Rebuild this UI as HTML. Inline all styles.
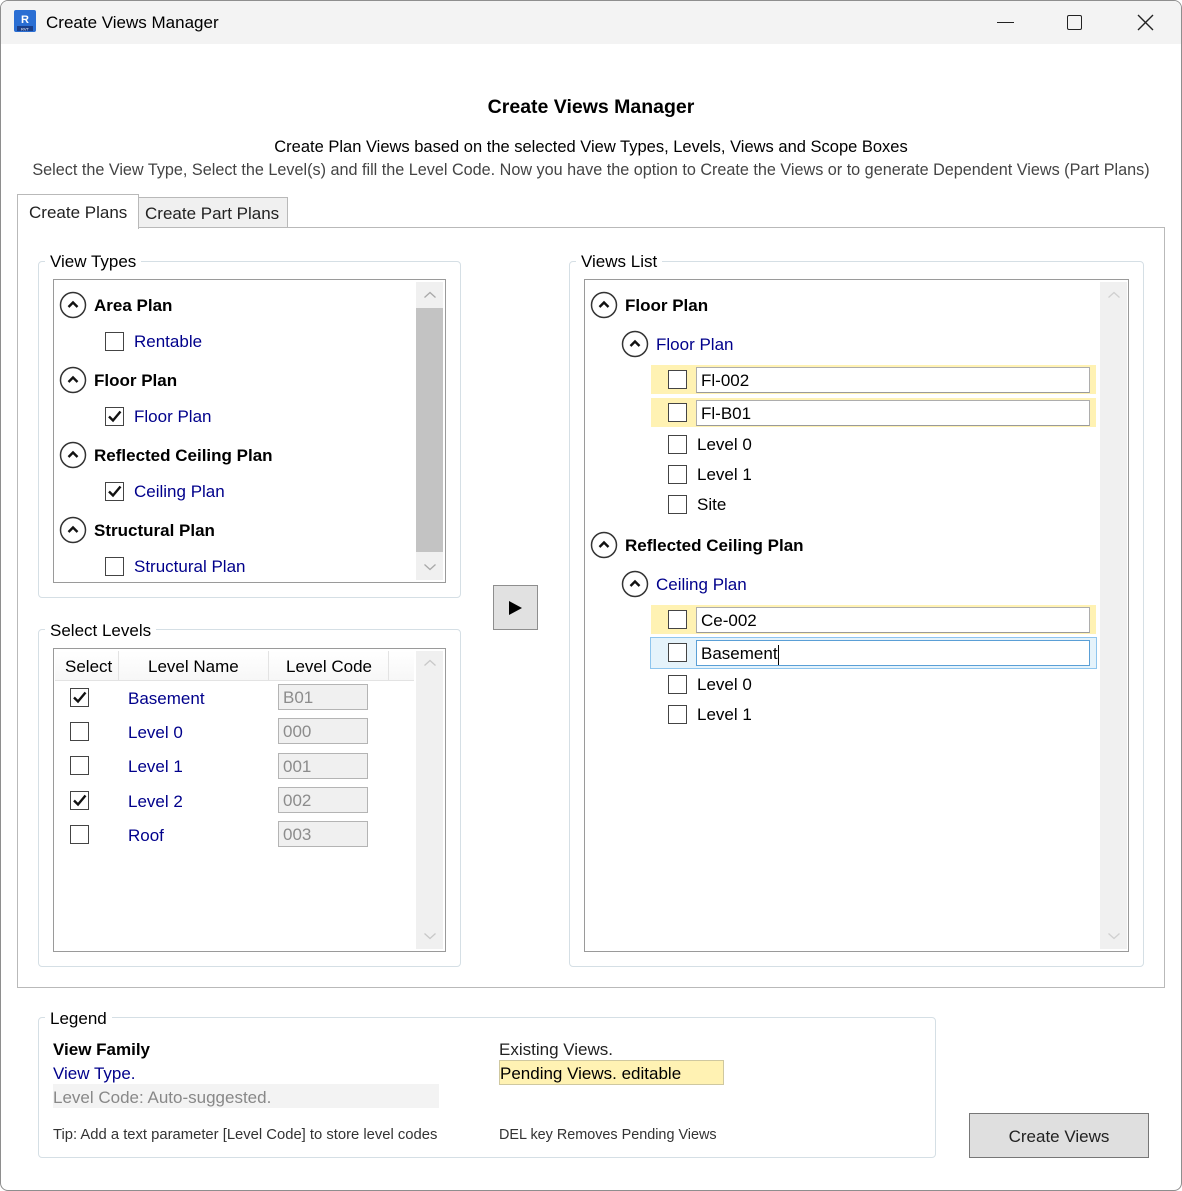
<!DOCTYPE html>
<html><head><meta charset="utf-8"><style>
*{box-sizing:border-box;margin:0;padding:0}
body{width:1182px;height:1191px;background:#fff;font-family:"Liberation Sans",sans-serif;font-size:17px;color:#000;position:relative;overflow:hidden}
.a{position:absolute}
.t{position:absolute;line-height:20px;white-space:nowrap;margin-top:1px}
.b{font-weight:bold}
.bl{color:#00008b}
.gb{position:absolute;border:1px solid #d5dfe5;border-radius:4px}
.gl{position:absolute;background:#fff;padding:0 5px;line-height:20px;font-size:17px;margin-top:1px}
.lb{position:absolute;border:1px solid #9a9a9a;background:#fff}
.sb{position:absolute;background:#f0f0f0}
.cb{position:absolute;width:19px;height:19px;border:1px solid #444;background:#fff}
.tb{position:absolute;border:1px solid #adadad;border-bottom-color:#9a9a9a;background:#fff;height:26px;line-height:25px;padding-left:4px}
.cd{position:absolute;width:90px;height:26px;border:1px solid #b4b4b4;background:#f0f0f0;color:#8c8c8c;line-height:25px;padding-left:4px}
.yb{position:absolute;background:#fff2b3}
</style></head><body>
<div class="a" style="left:0;top:0;width:1182px;height:1191px;border:1px solid #8e8e8e;border-radius:8px"></div>
<div class="a" style="left:1px;top:1px;width:1180px;height:43px;background:#f3f3f3;border-radius:7px 7px 0 0"></div>
<svg class="a" style="left:14px;top:10px" width="22" height="22"><rect x="0" y="0" width="22" height="22" rx="2" fill="#2a6ed3"/><rect x="3" y="16" width="16" height="5" fill="#1a3f8a"/><text x="11" y="13" font-family="Liberation Sans" font-weight="bold" font-size="11" fill="#fff" text-anchor="middle">R</text><text x="11" y="20.5" font-family="Liberation Sans" font-size="4" fill="#fff" text-anchor="middle">RVT</text></svg>
<div class="t" style="left:46px;top:12px;font-size:17px">Create Views Manager</div>
<div class="a" style="left:997px;top:22px;width:17px;height:1px;background:#222"></div>
<div class="a" style="left:1067px;top:15px;width:15px;height:15px;border:1.5px solid #222;border-radius:2px"></div>
<svg class="a" style="left:1137px;top:14px" width="17" height="17"><path d="M1 1L16 16M16 1L1 16" stroke="#222" stroke-width="1.4"/></svg>

<div class="t b" style="left:0;width:1182px;text-align:center;top:96px;font-size:19.5px">Create Views Manager</div>
<div class="t" style="left:0;width:1182px;text-align:center;top:136px;font-size:16.5px">Create Plan Views based on the selected View Types, Levels, Views and Scope Boxes</div>
<div class="t" style="left:0;width:1182px;text-align:center;top:159px;font-size:16.2px;color:#444">Select the View Type, Select the Level(s) and fill the Level Code. Now you have the option to Create the Views or to generate Dependent Views (Part Plans)</div>

<div class="a" style="left:17px;top:227px;width:1148px;height:761px;border:1px solid #b9b9b9"></div>
<div class="a" style="left:138px;top:197px;width:150px;height:31px;border:1px solid #b9b9b9;background:#f0f0f0"></div>
<div class="t" style="left:145px;top:203px;font-size:17px;color:#222">Create Part Plans</div>
<div class="a" style="left:17px;top:194px;width:122px;height:35px;border:1px solid #b9b9b9;border-bottom:none;background:#fff"></div>
<div class="t" style="left:29px;top:202px;font-size:17px;color:#222">Create Plans</div>

<div class="gb" style="left:38px;top:261px;width:423px;height:337px"></div>
<div class="gl" style="left:45px;top:251px">View Types</div>
<div class="lb" style="left:53px;top:279px;width:393px;height:304px"></div>
<div class="sb" style="left:416px;top:282px;width:27px;height:298px"></div>
<div class="a" style="left:416px;top:308px;width:27px;height:244px;background:#c3c3c3"></div>
<svg class="a" style="left:423px;top:289px" width="14" height="12"><path d="M1.5 8.5L7 3.5L12.5 8.5" stroke="#a8a8a8" stroke-width="1.3" fill="none"/></svg>
<svg class="a" style="left:423px;top:561px" width="14" height="12"><path d="M1.5 3.5L7 8.5L12.5 3.5" stroke="#a8a8a8" stroke-width="1.3" fill="none"/></svg>

<svg class="a" style="left:59px;top:291px" width="28" height="28"><circle cx="14" cy="14" r="12.5" fill="none" stroke="#333" stroke-width="1.5"/><path d="M9.5 16L14 11.5L18.5 16" stroke="#111" stroke-width="2.4" fill="none"/></svg>
<div class="t b" style="left:94px;top:295px">Area Plan</div>
<div class="cb" style="left:105px;top:332px"></div>
<div class="t bl" style="left:134px;top:331px">Rentable</div>
<svg class="a" style="left:59px;top:366px" width="28" height="28"><circle cx="14" cy="14" r="12.5" fill="none" stroke="#333" stroke-width="1.5"/><path d="M9.5 16L14 11.5L18.5 16" stroke="#111" stroke-width="2.4" fill="none"/></svg>
<div class="t b" style="left:94px;top:370px">Floor Plan</div>
<div class="cb" style="left:105px;top:407px"></div>
<svg class="a" style="left:105px;top:407px" width="19" height="19"><path d="M4 9.5L8 13.5L15.5 4.5" stroke="#111" stroke-width="2.4" fill="none"/></svg>
<div class="t bl" style="left:134px;top:406px">Floor Plan</div>
<svg class="a" style="left:59px;top:441px" width="28" height="28"><circle cx="14" cy="14" r="12.5" fill="none" stroke="#333" stroke-width="1.5"/><path d="M9.5 16L14 11.5L18.5 16" stroke="#111" stroke-width="2.4" fill="none"/></svg>
<div class="t b" style="left:94px;top:445px">Reflected Ceiling Plan</div>
<div class="cb" style="left:105px;top:482px"></div>
<svg class="a" style="left:105px;top:482px" width="19" height="19"><path d="M4 9.5L8 13.5L15.5 4.5" stroke="#111" stroke-width="2.4" fill="none"/></svg>
<div class="t bl" style="left:134px;top:481px">Ceiling Plan</div>
<svg class="a" style="left:59px;top:516px" width="28" height="28"><circle cx="14" cy="14" r="12.5" fill="none" stroke="#333" stroke-width="1.5"/><path d="M9.5 16L14 11.5L18.5 16" stroke="#111" stroke-width="2.4" fill="none"/></svg>
<div class="t b" style="left:94px;top:520px">Structural Plan</div>
<div class="cb" style="left:105px;top:557px"></div>
<div class="t bl" style="left:134px;top:556px">Structural Plan</div>

<div class="a" style="left:493px;top:585px;width:45px;height:45px;background:#e1e1e1;border:1px solid #8e8e8e"></div>
<svg class="a" style="left:508px;top:600px" width="15" height="16"><path d="M1 1L14 8L1 15Z" fill="#000"/></svg>

<div class="gb" style="left:38px;top:629px;width:423px;height:338px"></div>
<div class="gl" style="left:45px;top:620px">Select Levels</div>
<div class="lb" style="left:53px;top:648px;width:393px;height:304px"></div>
<div class="sb" style="left:416px;top:651px;width:27px;height:298px"></div>
<svg class="a" style="left:423px;top:657px" width="14" height="12"><path d="M1.5 8.5L7 3.5L12.5 8.5" stroke="#c8c8c8" stroke-width="1.3" fill="none"/></svg>
<svg class="a" style="left:423px;top:930px" width="14" height="12"><path d="M1.5 3.5L7 8.5L12.5 3.5" stroke="#c8c8c8" stroke-width="1.3" fill="none"/></svg>
<div class="a" style="left:55px;top:651px;width:359px;height:30px;background:linear-gradient(#fff,#f7f7f7);border-bottom:1px solid #e3e3e3"></div>
<div class="a" style="left:118px;top:651px;width:1px;height:30px;background:#e3e3e3"></div>
<div class="a" style="left:268px;top:651px;width:1px;height:30px;background:#e3e3e3"></div>
<div class="a" style="left:388px;top:651px;width:1px;height:30px;background:#e3e3e3"></div>
<div class="t" style="left:65px;top:656px">Select</div>
<div class="t" style="left:148px;top:656px">Level Name</div>
<div class="t" style="left:286px;top:656px">Level Code</div>

<div class="cb" style="left:70px;top:688px"></div><svg class="a" style="left:70px;top:688px" width="19" height="19"><path d="M4 9.5L8 13.5L15.5 4.5" stroke="#111" stroke-width="2.4" fill="none"/></svg>
<div class="t bl" style="left:128px;top:688px">Basement</div><div class="cd" style="left:278px;top:684px">B01</div>
<div class="cb" style="left:70px;top:722px"></div>
<div class="t bl" style="left:128px;top:722px">Level 0</div><div class="cd" style="left:278px;top:718px">000</div>
<div class="cb" style="left:70px;top:756px"></div>
<div class="t bl" style="left:128px;top:756px">Level 1</div><div class="cd" style="left:278px;top:753px">001</div>
<div class="cb" style="left:70px;top:791px"></div><svg class="a" style="left:70px;top:791px" width="19" height="19"><path d="M4 9.5L8 13.5L15.5 4.5" stroke="#111" stroke-width="2.4" fill="none"/></svg>
<div class="t bl" style="left:128px;top:791px">Level 2</div><div class="cd" style="left:278px;top:787px">002</div>
<div class="cb" style="left:70px;top:825px"></div>
<div class="t bl" style="left:128px;top:825px">Roof</div><div class="cd" style="left:278px;top:821px">003</div>

<div class="gb" style="left:569px;top:261px;width:575px;height:706px"></div>
<div class="gl" style="left:576px;top:251px">Views List</div>
<div class="lb" style="left:584px;top:279px;width:545px;height:673px"></div>
<div class="sb" style="left:1100px;top:282px;width:27px;height:667px"></div>
<svg class="a" style="left:1107px;top:289px" width="14" height="12"><path d="M1.5 8.5L7 3.5L12.5 8.5" stroke="#d0d0d0" stroke-width="1.3" fill="none"/></svg>
<svg class="a" style="left:1107px;top:930px" width="14" height="12"><path d="M1.5 3.5L7 8.5L12.5 3.5" stroke="#d0d0d0" stroke-width="1.3" fill="none"/></svg>

<svg class="a" style="left:590px;top:291px" width="28" height="28"><circle cx="14" cy="14" r="12.5" fill="none" stroke="#333" stroke-width="1.5"/><path d="M9.5 16L14 11.5L18.5 16" stroke="#111" stroke-width="2.4" fill="none"/></svg>
<div class="t b" style="left:625px;top:295px">Floor Plan</div>
<svg class="a" style="left:621px;top:330px" width="28" height="28"><circle cx="14" cy="14" r="12.5" fill="none" stroke="#333" stroke-width="1.5"/><path d="M9.5 16L14 11.5L18.5 16" stroke="#111" stroke-width="2.4" fill="none"/></svg>
<div class="t bl" style="left:656px;top:334px">Floor Plan</div>

<div class="yb" style="left:651px;top:365px;width:445px;height:29px"></div>
<div class="cb" style="left:668px;top:370px"></div>
<div class="tb" style="left:696px;top:367px;width:394px">Fl-002</div>
<div class="yb" style="left:651px;top:398px;width:445px;height:29px"></div>
<div class="cb" style="left:668px;top:403px"></div>
<div class="tb" style="left:696px;top:400px;width:394px">Fl-B01</div>
<div class="cb" style="left:668px;top:435px"></div><div class="t" style="left:697px;top:434px">Level 0</div>
<div class="cb" style="left:668px;top:465px"></div><div class="t" style="left:697px;top:464px">Level 1</div>
<div class="cb" style="left:668px;top:495px"></div><div class="t" style="left:697px;top:494px">Site</div>

<svg class="a" style="left:590px;top:531px" width="28" height="28"><circle cx="14" cy="14" r="12.5" fill="none" stroke="#333" stroke-width="1.5"/><path d="M9.5 16L14 11.5L18.5 16" stroke="#111" stroke-width="2.4" fill="none"/></svg>
<div class="t b" style="left:625px;top:535px">Reflected Ceiling Plan</div>
<svg class="a" style="left:621px;top:570px" width="28" height="28"><circle cx="14" cy="14" r="12.5" fill="none" stroke="#333" stroke-width="1.5"/><path d="M9.5 16L14 11.5L18.5 16" stroke="#111" stroke-width="2.4" fill="none"/></svg>
<div class="t bl" style="left:656px;top:574px">Ceiling Plan</div>

<div class="yb" style="left:651px;top:605px;width:445px;height:29px"></div>
<div class="cb" style="left:668px;top:610px"></div>
<div class="tb" style="left:696px;top:607px;width:394px">Ce-002</div>
<div class="a" style="left:650px;top:637px;width:447px;height:32px;background:#e5f3fb;border:1px solid #8ec5ee"></div>
<div class="cb" style="left:668px;top:643px"></div>
<div class="tb" style="left:696px;top:640px;width:394px;border-color:#5a9fd6">Basement<span style="display:inline-block;width:1px;height:20px;background:#000;vertical-align:middle"></span></div>
<div class="cb" style="left:668px;top:675px"></div><div class="t" style="left:697px;top:674px">Level 0</div>
<div class="cb" style="left:668px;top:705px"></div><div class="t" style="left:697px;top:704px">Level 1</div>

<div class="gb" style="left:38px;top:1017px;width:898px;height:141px"></div>
<div class="gl" style="left:45px;top:1008px">Legend</div>
<div class="t b" style="left:53px;top:1039px">View Family</div>
<div class="t bl" style="left:53px;top:1063px">View Type.</div>
<div class="a" style="left:53px;top:1084px;width:386px;height:24px;background:#f3f3f3"></div>
<div class="t" style="left:53px;top:1087px;color:#888">Level Code: Auto-suggested.</div>
<div class="t" style="left:53px;top:1124px;font-size:14.8px;color:#333">Tip: Add a text parameter [Level Code] to store level codes</div>
<div class="t" style="left:499px;top:1039px;color:#222">Existing Views.</div>
<div class="a" style="left:499px;top:1060px;width:225px;height:25px;background:#fff2b3;border:1px solid #cfc8a0"></div>
<div class="t" style="left:500px;top:1063px">Pending Views. editable</div>
<div class="t" style="left:499px;top:1124px;font-size:14.4px;color:#333">DEL key Removes Pending Views</div>

<div class="a" style="left:969px;top:1113px;width:180px;height:45px;background:#dfdfdf;border:1px solid #777"></div>
<div class="t" style="left:969px;width:180px;text-align:center;top:1126px;color:#222">Create Views</div>
</body></html>
